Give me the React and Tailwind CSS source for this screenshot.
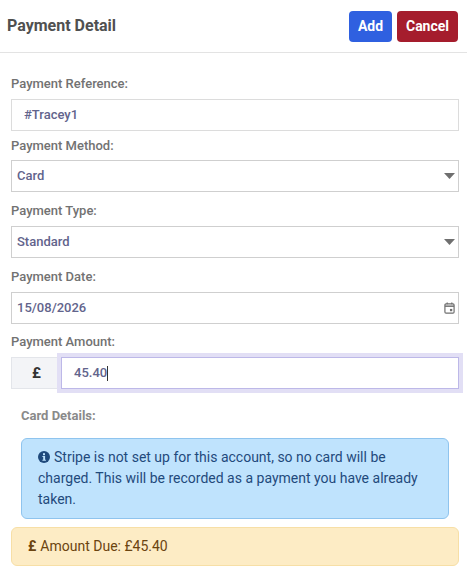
import React from 'react';

const Label = ({ children }) => (
  <label className="block h-[16px] pt-[1px] text-[13px] leading-[16px] font-medium text-[#727272]">{children}</label>
);

const Caret = () => (
  <svg width="11" height="6" viewBox="0 0 11 6" className="shrink-0">
    <path d="M0 0h11L5.5 6z" fill="#6f6f6f" />
  </svg>
);

const SelectBox = ({ value, className }) => (
  <div className={`flex h-[32px] items-center justify-between border border-[#cfcfcf] bg-white pl-[5px] pr-[3px] text-[13px] font-medium text-[#62648c] ${className}`}>
    <span>{value}</span>
    <Caret />
  </div>
);

export default function App() {
  return (
    <div className="h-[577px] w-[467px] overflow-hidden bg-white font-['Roboto',sans-serif]">
      <header className="flex h-[53px] items-center justify-between border-b border-[#e3e3e3] pl-[7px] pr-[9px]">
        <h1 className="text-[16px] font-bold text-[#505050]">Payment Detail</h1>
        <div className="flex gap-[5px]">
          <button className="h-[31px] w-[43px] rounded-[4px] bg-[#2f60e0] text-[14px] font-bold text-white">Add</button>
          <button className="h-[31px] w-[61px] rounded-[4px] bg-[#a51d2d] text-[14px] font-bold text-white">Cancel</button>
        </div>
      </header>

      <div className="pl-[11px] pr-[8px] pt-[22px]">
        <Label>Payment Reference:</Label>
        <div className="mt-[8px] flex h-[32px] items-center border border-[#dcdcdc] bg-white pl-[12px] text-[13px] font-medium text-[#62648c]">
          #Tracey1
        </div>

        <div className="mt-[6px]"><Label>Payment Method:</Label></div>
        <SelectBox value="Card" className="mt-[7px]" />

        <div className="mt-[10px]"><Label>Payment Type:</Label></div>
        <SelectBox value="Standard" className="mt-[8px]" />

        <div className="mt-[10px]"><Label>Payment Date:</Label></div>
        <div className="mt-[8px] flex h-[32px] items-center justify-between border border-[#cfcfcf] bg-white pl-[5px] pr-[3px] text-[13px] font-medium text-[#62648c]">
          <span>15/08/2026</span>
          <svg width="11" height="12" viewBox="0 0 12 13" fill="none">
            <rect x="1" y="2" width="10" height="10" rx="1.2" stroke="#6f6f6f" strokeWidth="1.3" />
            <path d="M1 4.5h10" stroke="#6f6f6f" strokeWidth="1.6" />
            <path d="M3.5 0.5v2M8.5 0.5v2" stroke="#6f6f6f" strokeWidth="1.3" />
            <rect x="6.5" y="7.5" width="2.5" height="2.5" fill="#6f6f6f" />
          </svg>
        </div>

        <div className="mt-[9px]"><Label>Payment Amount:</Label></div>
        <div className="mt-[8px] flex h-[32px]">
          <div className="flex w-[50px] items-center justify-center border border-r-0 border-[#e3e5ea] bg-[#f3f4f7] text-[15px] font-bold text-[#333]">
            £
          </div>
          <div className="flex flex-1 items-center border border-[#bdb8e8] bg-white pl-[12px] text-[13px] font-medium text-[#62648c] shadow-[0_0_0_4px_#e2dff5]">
            45.40<span className="h-[15px] w-px bg-[#333]" />
          </div>
        </div>

        <p className="mt-[19px] pl-[10px] text-[13px] leading-[16px] font-bold text-[#8a8a8a]">Card Details:</p>

        <div className="mx-[10px] mt-[14px] rounded-[6px] border border-[#8fc4ee] bg-[#bfe3fd] px-[16px] py-[8px] text-[14px] leading-[21px] text-[#1f4a7c]">
          <svg width="12" height="12" viewBox="0 0 12 12" className="mr-[4px] inline-block align-[-1px]">
            <circle cx="6" cy="6" r="6" fill="#1f4a7c" />
            <rect x="5" y="2.2" width="2" height="2" fill="#bfe3fd" />
            <path d="M4.4 5h2.7v3.7h.8v1H4.4v-1h.8V6h-.8z" fill="#bfe3fd" />
          </svg>
          Stripe is not set up for this account, so no card will be charged. This will be recorded as a payment you have already taken.
        </div>

        <div className="mt-[8px] flex h-[39px] items-center gap-[4px] rounded-[6px] border border-[#f7dfa6] bg-[#fdecc5] pl-[16px] text-[14px] text-[#6b4410]">
          <span className="font-bold">£</span>
          <span>Amount Due: £45.40</span>
        </div>
      </div>
    </div>
  );
}
